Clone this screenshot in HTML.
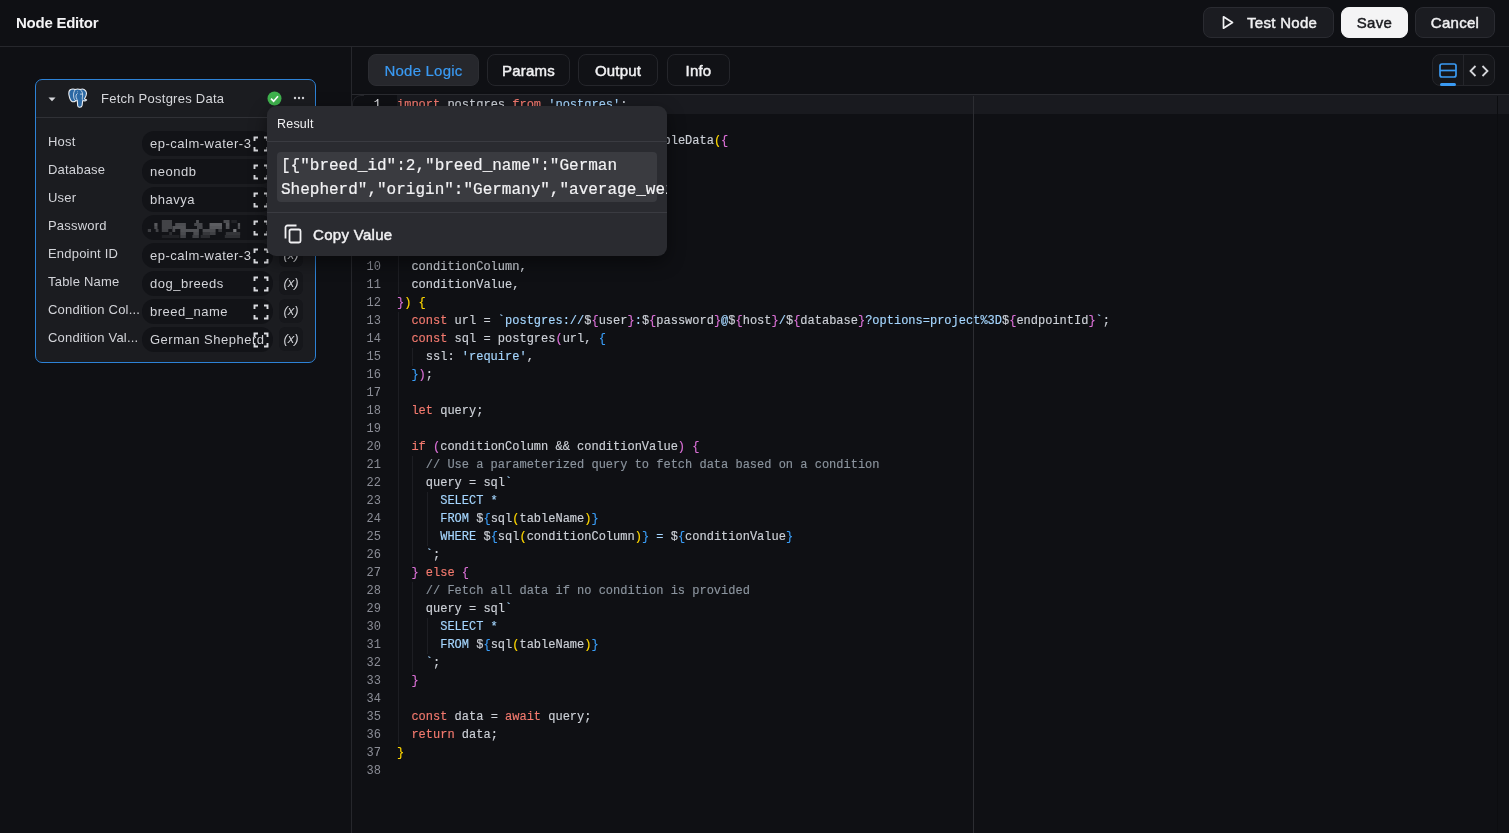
<!DOCTYPE html>
<html><head><meta charset="utf-8"><title>Node Editor</title>
<style>
*{box-sizing:border-box;margin:0;padding:0}
html,body{width:1509px;height:833px;overflow:hidden;background:#0f1014;color:#e6e6ea;font-family:"Liberation Sans",sans-serif;}
.top{position:absolute;left:0;top:0;width:1509px;height:47px;border-bottom:1px solid #26272c;}
.title{position:absolute;left:16px;top:13.500px;font-size:15px;font-weight:bold;color:#f4f4f6;letter-spacing:-0.25px}
.btn{position:absolute;top:7px;height:31px;border-radius:8px;background:#1b1c21;border:1px solid #2a2b31;color:#f1f1f3;font-size:15px;font-weight:normal;-webkit-text-stroke:.45px currentColor;letter-spacing:.3px;line-height:29px;text-align:center}
.left{position:absolute;left:0;top:47px;width:352px;height:786px;border-right:1px solid #26272c}
.card{position:absolute;left:35.300px;top:79px;width:280.500px;height:284px;border:1.5px solid #2d82d6;border-radius:7px;background:#1b1c20}
.chead{height:38px;border-bottom:1px solid #303136;position:relative}
.chead .tt{position:absolute;left:65px;top:11px;font-size:13px;color:#d6d7db;letter-spacing:.25px}
.row{position:absolute;left:0;height:24px;width:100%}
.lab{position:absolute;left:12px;top:3px;font-size:13px;color:#d3d4d9;letter-spacing:.2px;white-space:nowrap}
.pill{position:absolute;left:106px;top:0;width:131px;height:25px;border-radius:12px;background:#121317;overflow:hidden}
.pill .v{position:absolute;left:8px;top:5px;font-size:13px;color:#d3d4d9;white-space:nowrap;letter-spacing:.5px}
.pill .ex{position:absolute;left:111px;top:5px}
.xb{position:absolute;left:243px;top:0;width:24px;height:24px;border-radius:6px;background:#16171b;text-align:center;font-size:13px;line-height:23px;color:#cfd0d5}
.tab{position:absolute;top:54px;height:32px;border-radius:8px;border:1px solid #25262b;background:#111216;color:#f1f1f3;font-size:15px;font-weight:normal;-webkit-text-stroke:.45px currentColor;letter-spacing:.2px;line-height:32px;text-align:center}
.tab.act{background:#26272c;border-color:#2c2d32;color:#3a9af3;-webkit-text-stroke:.2px currentColor}
.editor{position:absolute;left:352px;top:94px;padding-top:1px;width:1157px;height:738px;border-top:1px solid #2a2b30;background:#0f1014;font-family:"Liberation Mono","DejaVu Sans Mono",monospace;font-size:12px}
.ln{position:relative;height:18px;line-height:18px;white-space:pre}
.ln.cur:before{content:'';position:absolute;left:45px;right:0;top:-1px;height:19px;background:#191a1f}
.no{position:absolute;left:0;width:29px;text-align:right;color:#8b8d96}
.ln.cur .no{color:#e6e6ea}
.cd{position:absolute;left:45px;-webkit-text-stroke:.15px currentColor}
.g{position:absolute;top:0;width:1px;height:18px;background:#1d1e23}
.k{color:#f47a6f}.s{color:#a5d6ff}.c{color:#8b949e}.t,.f{color:#cdd1d8}.b1{color:#ffd700}.b2{color:#da70d6}.b3{color:#3a9cf5}
.ruler{position:absolute;left:973px;top:96px;width:1px;height:737px;background:#2c2d32}
.pop{position:absolute;left:267px;top:106px;width:400px;height:150px;border-radius:9px;background:#2a2b30;box-shadow:0 6px 18px rgba(0,0,0,.45);overflow:hidden}
.pop .h{position:absolute;left:10px;top:10.500px;font-size:12.5px;color:#f0f0f2;letter-spacing:.2px}
.pop .sep{position:absolute;left:0;width:400px;height:1px;background:#3a3b41}
.pop .cb{position:absolute;left:10px;top:46px;width:380px;height:50px;border-radius:4px;background:#3a3b40;font-family:"Liberation Mono","DejaVu Sans Mono",monospace;font-size:16px;line-height:24px;color:#f2f2f4;white-space:pre;padding:2px 0 0 4px;-webkit-text-stroke:.2px currentColor;overflow:visible}
.pop .cv{position:absolute;left:46px;top:119.500px;font-size:15px;-webkit-text-stroke:.45px currentColor;letter-spacing:.3px;color:#f1f1f3}
body>*{will-change:transform}
</style></head><body>
<div class="top"><div class="title">Node Editor</div>
<div class="btn" style="left:1203px;width:131px"><svg style="position:absolute;left:17px;top:7px" width="14" height="15" viewBox="0 0 14 15"><path d="M2.5 1.8 L11.5 7.5 L2.5 13.2 Z" fill="none" stroke="#f1f1f3" stroke-width="1.7" stroke-linejoin="round"/></svg><span style="position:absolute;left:43px;top:0">Test Node</span></div>
<div class="btn" style="left:1341px;width:67px;background:#f4f4f5;border-color:#f4f4f5;color:#1a1b1f">Save</div>
<div class="btn" style="left:1415px;width:80px">Cancel</div>
</div>
<div class="left"></div>
<div class="tab act" style="left:368px;width:111px">Node Logic</div>
<div class="tab" style="left:487px;width:83px">Params</div>
<div class="tab" style="left:578px;width:80px">Output</div>
<div class="tab" style="left:667px;width:63px">Info</div>
<div style="position:absolute;left:1432px;top:54px;width:63px;height:32px;border-radius:8px;border:1px solid #25262b;background:#15161a">
<div style="position:absolute;left:30px;top:0;width:1px;height:30px;background:#25262b"></div>
<svg style="position:absolute;left:6px;top:8px" width="18" height="16" viewBox="0 0 18 16"><rect x="1" y="1" width="16" height="13" rx="2" fill="none" stroke="#3a9af3" stroke-width="1.7"/><path d="M1 7.5h16" stroke="#3a9af3" stroke-width="1.7"/></svg>
<div style="position:absolute;left:7px;top:28px;width:16px;height:3px;border-radius:2px;background:#3a9af3"></div>
<svg style="position:absolute;left:36px;top:8.5px" width="20" height="14" viewBox="0 0 20 14"><path d="M6.5 2 L1.5 7 L6.5 12 M13.5 2 L18.5 7 L13.5 12" fill="none" stroke="#d6d7db" stroke-width="1.8"/></svg>
</div>
<div class="editor">
<div class="ln cur"><span class="no">1</span><span class="cd"><span class="k">import</span><span class="t"> postgres </span><span class="k">from</span><span class="t"> </span><span class="s">&#x27;postgres&#x27;</span><span class="t">;</span></span></div>
<div class="ln"><span class="no">2</span><span class="cd"></span></div>
<div class="ln"><span class="no">3</span><span class="cd"><span class="k">export</span><span class="t"> </span><span class="k">default</span><span class="t"> </span><span class="k">async</span><span class="t"> </span><span class="k">function</span><span class="t"> </span><span class="f">fetchTableData</span><span class="b1">(</span><span class="b2">{</span></span></div>
<div class="ln"><span class="no">4</span><i class="g" style="left:46.0px"></i><span class="cd"><span class="t">  host,</span></span></div>
<div class="ln"><span class="no">5</span><i class="g" style="left:46.0px"></i><span class="cd"><span class="t">  database,</span></span></div>
<div class="ln"><span class="no">6</span><i class="g" style="left:46.0px"></i><span class="cd"><span class="t">  user,</span></span></div>
<div class="ln"><span class="no">7</span><i class="g" style="left:46.0px"></i><span class="cd"><span class="t">  password,</span></span></div>
<div class="ln"><span class="no">8</span><i class="g" style="left:46.0px"></i><span class="cd"><span class="t">  endpointId,</span></span></div>
<div class="ln"><span class="no">9</span><i class="g" style="left:46.0px"></i><span class="cd"><span class="t">  tableName,</span></span></div>
<div class="ln"><span class="no">10</span><i class="g" style="left:46.0px"></i><span class="cd"><span class="t">  conditionColumn,</span></span></div>
<div class="ln"><span class="no">11</span><i class="g" style="left:46.0px"></i><span class="cd"><span class="t">  conditionValue,</span></span></div>
<div class="ln"><span class="no">12</span><span class="cd"><span class="b2">}</span><span class="b1">)</span><span class="t"> </span><span class="b1">{</span></span></div>
<div class="ln"><span class="no">13</span><i class="g" style="left:46.0px"></i><span class="cd"><span class="t">  </span><span class="k">const</span><span class="t"> url = </span><span class="s">`postgres://</span><span class="t">$</span><span class="b2">{</span><span class="t">user</span><span class="b2">}</span><span class="s">:</span><span class="t">$</span><span class="b2">{</span><span class="t">password</span><span class="b2">}</span><span class="s">@</span><span class="t">$</span><span class="b2">{</span><span class="t">host</span><span class="b2">}</span><span class="s">/</span><span class="t">$</span><span class="b2">{</span><span class="t">database</span><span class="b2">}</span><span class="s">?options=project%3D</span><span class="t">$</span><span class="b2">{</span><span class="t">endpointId</span><span class="b2">}</span><span class="s">`</span><span class="t">;</span></span></div>
<div class="ln"><span class="no">14</span><i class="g" style="left:46.0px"></i><span class="cd"><span class="t">  </span><span class="k">const</span><span class="t"> sql = postgres</span><span class="b2">(</span><span class="t">url, </span><span class="b3">{</span></span></div>
<div class="ln"><span class="no">15</span><i class="g" style="left:46.0px"></i><i class="g" style="left:60.4px"></i><span class="cd"><span class="t">    ssl: </span><span class="s">&#x27;require&#x27;</span><span class="t">,</span></span></div>
<div class="ln"><span class="no">16</span><i class="g" style="left:46.0px"></i><span class="cd"><span class="t">  </span><span class="b3">}</span><span class="b2">)</span><span class="t">;</span></span></div>
<div class="ln"><span class="no">17</span><i class="g" style="left:46.0px"></i><span class="cd"></span></div>
<div class="ln"><span class="no">18</span><i class="g" style="left:46.0px"></i><span class="cd"><span class="t">  </span><span class="k">let</span><span class="t"> query;</span></span></div>
<div class="ln"><span class="no">19</span><i class="g" style="left:46.0px"></i><span class="cd"></span></div>
<div class="ln"><span class="no">20</span><i class="g" style="left:46.0px"></i><span class="cd"><span class="t">  </span><span class="k">if</span><span class="t"> </span><span class="b2">(</span><span class="t">conditionColumn &amp;&amp; conditionValue</span><span class="b2">)</span><span class="t"> </span><span class="b2">{</span></span></div>
<div class="ln"><span class="no">21</span><i class="g" style="left:46.0px"></i><i class="g" style="left:60.4px"></i><span class="cd"><span class="t">    </span><span class="c">// Use a parameterized query to fetch data based on a condition</span></span></div>
<div class="ln"><span class="no">22</span><i class="g" style="left:46.0px"></i><i class="g" style="left:60.4px"></i><span class="cd"><span class="t">    query = sql</span><span class="s">`</span></span></div>
<div class="ln"><span class="no">23</span><i class="g" style="left:46.0px"></i><i class="g" style="left:60.4px"></i><i class="g" style="left:74.8px"></i><span class="cd"><span class="s">      SELECT *</span></span></div>
<div class="ln"><span class="no">24</span><i class="g" style="left:46.0px"></i><i class="g" style="left:60.4px"></i><i class="g" style="left:74.8px"></i><span class="cd"><span class="s">      FROM </span><span class="t">$</span><span class="b3">{</span><span class="t">sql</span><span class="b1">(</span><span class="t">tableName</span><span class="b1">)</span><span class="b3">}</span></span></div>
<div class="ln"><span class="no">25</span><i class="g" style="left:46.0px"></i><i class="g" style="left:60.4px"></i><i class="g" style="left:74.8px"></i><span class="cd"><span class="s">      WHERE </span><span class="t">$</span><span class="b3">{</span><span class="t">sql</span><span class="b1">(</span><span class="t">conditionColumn</span><span class="b1">)</span><span class="b3">}</span><span class="s"> = </span><span class="t">$</span><span class="b3">{</span><span class="t">conditionValue</span><span class="b3">}</span></span></div>
<div class="ln"><span class="no">26</span><i class="g" style="left:46.0px"></i><i class="g" style="left:60.4px"></i><span class="cd"><span class="s">    `</span><span class="t">;</span></span></div>
<div class="ln"><span class="no">27</span><i class="g" style="left:46.0px"></i><span class="cd"><span class="t">  </span><span class="b2">}</span><span class="t"> </span><span class="k">else</span><span class="t"> </span><span class="b2">{</span></span></div>
<div class="ln"><span class="no">28</span><i class="g" style="left:46.0px"></i><i class="g" style="left:60.4px"></i><span class="cd"><span class="t">    </span><span class="c">// Fetch all data if no condition is provided</span></span></div>
<div class="ln"><span class="no">29</span><i class="g" style="left:46.0px"></i><i class="g" style="left:60.4px"></i><span class="cd"><span class="t">    query = sql</span><span class="s">`</span></span></div>
<div class="ln"><span class="no">30</span><i class="g" style="left:46.0px"></i><i class="g" style="left:60.4px"></i><i class="g" style="left:74.8px"></i><span class="cd"><span class="s">      SELECT *</span></span></div>
<div class="ln"><span class="no">31</span><i class="g" style="left:46.0px"></i><i class="g" style="left:60.4px"></i><i class="g" style="left:74.8px"></i><span class="cd"><span class="s">      FROM </span><span class="t">$</span><span class="b3">{</span><span class="t">sql</span><span class="b1">(</span><span class="t">tableName</span><span class="b1">)</span><span class="b3">}</span></span></div>
<div class="ln"><span class="no">32</span><i class="g" style="left:46.0px"></i><i class="g" style="left:60.4px"></i><span class="cd"><span class="s">    `</span><span class="t">;</span></span></div>
<div class="ln"><span class="no">33</span><i class="g" style="left:46.0px"></i><span class="cd"><span class="t">  </span><span class="b2">}</span></span></div>
<div class="ln"><span class="no">34</span><i class="g" style="left:46.0px"></i><span class="cd"></span></div>
<div class="ln"><span class="no">35</span><i class="g" style="left:46.0px"></i><span class="cd"><span class="t">  </span><span class="k">const</span><span class="t"> data = </span><span class="k">await</span><span class="t"> query;</span></span></div>
<div class="ln"><span class="no">36</span><i class="g" style="left:46.0px"></i><span class="cd"><span class="t">  </span><span class="k">return</span><span class="t"> data;</span></span></div>
<div class="ln"><span class="no">37</span><span class="cd"><span class="b1">}</span></span></div>
<div class="ln"><span class="no">38</span><span class="cd"></span></div>
</div>
<div style="position:absolute;left:352px;top:95px;width:12px;height:12px;border-top-left-radius:9px;border-left:1px solid #24252a;border-top:1px solid #24252a;border-right:0;border-bottom:0"></div><div class="ruler"></div><div style="position:absolute;left:1497px;top:96px;width:1px;height:737px;background:#0c0d10"></div>
<div class="card">
<div class="chead">
<svg style="position:absolute;left:11.500px;top:16.500px" width="8" height="5" viewBox="0 0 8 5"><path d="M.5 .5h7L4 4.300z" fill="#d6d7db"/></svg>
<svg style="position:absolute;left:31.500px;top:7.500px" width="20" height="21" viewBox="0 0 20 21"><path d="M3.200 1.300C1.200 1.900.5 4.300 1 7.200c.5 2.900 1.600 5.900 3.500 6.500 1.300.4 2.400-.3 3.300-1l1.500.1.400 4.900c.2 2.100 4 2.100 4.400-.3l.6-4.900c1.200.5 3.200.3 3.900-.6-1-.2-1.800-.5-2.100-1.100 1.600-2.500 2.600-6 1.100-8-1.400-1.900-3.900-2-5.500-1.300-1.400-.6-3.400-.6-4.900 0-1.200-.6-2.800-.6-4-.2z" fill="#2c69a4" stroke="#eceef2" stroke-width="1.100" stroke-linejoin="round"/><path d="M7.300 1.600C5.700 3.200 5.200 6.200 5.700 9.100c.3 1.900 1 3.100 2 3.600M9.300 5.500c-1.100.6-1.600 2.400-1.100 4 .4 1.400 1.100 2 1.200 3.200M12.300 1.600c1.700 1.100 2.700 3.600 2.300 6.500-.2 1.300-.6 2.300-.3 3.300M12.300 6.200c.8-.5 1.800-.3 2.100.5" fill="none" stroke="#dfe8f2" stroke-width=".8" stroke-linecap="round"/><circle cx="9.500" cy="3.700" r=".55" fill="#9fb4c8"/></svg>
<span class="tt">Fetch Postgres Data</span>
<svg style="position:absolute;left:231px;top:11px" width="15" height="15" viewBox="0 0 15 15"><circle cx="7.500" cy="7.500" r="7" fill="#3fb24d"/><path d="M4 7.700 L6.600 10.200 L11 5.300" fill="none" stroke="#fff" stroke-width="1.700"/></svg>
<svg style="position:absolute;left:257px;top:16px" width="12" height="4" viewBox="0 0 12 4"><circle cx="2" cy="2" r="1.200" fill="#d6d7db"/><circle cx="6" cy="2" r="1.200" fill="#d6d7db"/><circle cx="10" cy="2" r="1.200" fill="#d6d7db"/></svg>
</div>
<div class="row" style="top:51px"><span class="lab">Host</span><span class="pill"><span class="v">ep-calm-water-3</span><svg class="ex" viewBox="0 0 16 16" width="16" height="16"><path d="M1.5 5V1.5H5M11 1.5h3.5V5M14.5 11v3.5H11M5 14.5H1.5V11" fill="none" stroke="#dadbe0" stroke-width="1.9"/></svg></span></div>
<div class="row" style="top:79px"><span class="lab">Database</span><span class="pill"><span class="v">neondb</span><svg class="ex" viewBox="0 0 16 16" width="16" height="16"><path d="M1.5 5V1.5H5M11 1.5h3.5V5M14.5 11v3.5H11M5 14.5H1.5V11" fill="none" stroke="#dadbe0" stroke-width="1.9"/></svg></span></div>
<div class="row" style="top:107px"><span class="lab">User</span><span class="pill"><span class="v">bhavya</span><svg class="ex" viewBox="0 0 16 16" width="16" height="16"><path d="M1.5 5V1.5H5M11 1.5h3.5V5M14.5 11v3.5H11M5 14.5H1.5V11" fill="none" stroke="#dadbe0" stroke-width="1.9"/></svg></span></div>
<div class="row" style="top:135px"><span class="lab">Password</span><span class="pill"><svg class="pwsvg" width="110" height="25" viewBox="0 0 110 25" style="position:absolute;left:0;top:0"><rect x="19.8" y="5" width="10.2" height="3" fill="rgb(66,67,71)"/><rect x="54.1" y="5" width="2.8" height="3" fill="rgb(80,81,85)"/><rect x="81.5" y="5" width="6.0" height="3" fill="rgb(76,77,81)"/><rect x="89.3" y="5" width="5.6" height="3" fill="rgb(34,35,39)"/><rect x="12.3" y="8" width="3.2" height="3" fill="rgb(88,89,93)"/><rect x="19.8" y="8" width="10.2" height="3" fill="rgb(66,67,71)"/><rect x="33.2" y="8" width="10.7" height="3" fill="rgb(76,77,81)"/><rect x="52.2" y="8" width="8.3" height="3" fill="rgb(70,71,75)"/><rect x="67.5" y="8" width="12.5" height="3" fill="rgb(92,93,97)"/><rect x="83.8" y="8" width="3.7" height="3" fill="rgb(86,87,91)"/><rect x="95.8" y="8" width="2.3" height="3" fill="rgb(86,87,91)"/><rect x="12.3" y="11" width="3.2" height="3" fill="rgb(76,77,81)"/><rect x="19.8" y="11" width="10.2" height="3" fill="rgb(66,67,71)"/><rect x="30.4" y="11" width="13.5" height="3" fill="rgb(80,81,85)"/><rect x="55.0" y="11" width="5.6" height="3" fill="rgb(70,71,75)"/><rect x="67.5" y="11" width="12.5" height="3" fill="rgb(86,87,91)"/><rect x="83.8" y="11" width="3.7" height="3" fill="rgb(80,81,85)"/><rect x="95.8" y="11" width="2.3" height="3" fill="rgb(76,77,81)"/><rect x="5.8" y="14" width="3.2" height="3" fill="rgb(62,63,67)"/><rect x="13.7" y="14" width="2.8" height="3" fill="rgb(64,65,69)"/><rect x="19.8" y="14" width="6.5" height="3" fill="rgb(64,65,69)"/><rect x="30.4" y="14" width="2.8" height="3" fill="rgb(76,77,81)"/><rect x="38.3" y="14" width="18.6" height="3" fill="rgb(80,81,85)"/><rect x="60.6" y="14" width="13.0" height="3" fill="rgb(74,75,79)"/><rect x="76.3" y="14" width="3.7" height="3" fill="rgb(54,55,59)"/><rect x="91.2" y="14" width="3.2" height="3" fill="rgb(118,119,123)"/><rect x="27.2" y="17" width="2.8" height="3" fill="rgb(44,45,49)"/><rect x="38.3" y="17" width="5.6" height="3" fill="rgb(74,75,79)"/><rect x="51.3" y="17" width="5.6" height="3" fill="rgb(74,75,79)"/><rect x="60.6" y="17" width="7.4" height="3" fill="rgb(54,55,59)"/><rect x="68.0" y="17" width="5.6" height="3" fill="rgb(64,65,69)"/><rect x="83.8" y="17" width="14.4" height="3" fill="rgb(52,53,57)"/><rect x="19.8" y="20" width="17.6" height="3" fill="rgb(32,33,37)"/><rect x="38.3" y="20" width="5.6" height="3" fill="rgb(64,65,69)"/><rect x="50.4" y="20" width="6.5" height="3" fill="rgb(64,65,69)"/><rect x="58.7" y="20" width="9.3" height="3" fill="rgb(42,43,47)"/><rect x="82.8" y="20" width="15.3" height="3" fill="rgb(46,47,51)"/></svg><svg class="ex" viewBox="0 0 16 16" width="16" height="16"><path d="M1.5 5V1.5H5M11 1.5h3.5V5M14.5 11v3.5H11M5 14.5H1.5V11" fill="none" stroke="#dadbe0" stroke-width="1.9"/></svg></span></div>
<div class="row" style="top:163px"><span class="lab">Endpoint ID</span><span class="pill"><span class="v">ep-calm-water-3</span><svg class="ex" viewBox="0 0 16 16" width="16" height="16"><path d="M1.5 5V1.5H5M11 1.5h3.5V5M14.5 11v3.5H11M5 14.5H1.5V11" fill="none" stroke="#dadbe0" stroke-width="1.9"/></svg></span><span class="xb"><i>(x)</i></span></div>
<div class="row" style="top:191px"><span class="lab">Table Name</span><span class="pill"><span class="v">dog_breeds</span><svg class="ex" viewBox="0 0 16 16" width="16" height="16"><path d="M1.5 5V1.5H5M11 1.5h3.5V5M14.5 11v3.5H11M5 14.5H1.5V11" fill="none" stroke="#dadbe0" stroke-width="1.9"/></svg></span><span class="xb"><i>(x)</i></span></div>
<div class="row" style="top:219px"><span class="lab">Condition Col...</span><span class="pill"><span class="v">breed_name</span><svg class="ex" viewBox="0 0 16 16" width="16" height="16"><path d="M1.5 5V1.5H5M11 1.5h3.5V5M14.5 11v3.5H11M5 14.5H1.5V11" fill="none" stroke="#dadbe0" stroke-width="1.9"/></svg></span><span class="xb"><i>(x)</i></span></div>
<div class="row" style="top:247px"><span class="lab">Condition Val...</span><span class="pill"><span class="v">German Shepherd</span><svg class="ex" viewBox="0 0 16 16" width="16" height="16"><path d="M1.5 5V1.5H5M11 1.5h3.5V5M14.5 11v3.5H11M5 14.5H1.5V11" fill="none" stroke="#dadbe0" stroke-width="1.9"/></svg></span><span class="xb"><i>(x)</i></span></div>
</div>
<div class="pop">
<div class="h">Result</div>
<div class="sep" style="top:35px"></div>
<div class="cb">[{"breed_id":2,"breed_name":"German
Shepherd","origin":"Germany","average_weight":75}]</div>
<div class="sep" style="top:106px"></div>
<svg style="position:absolute;left:17px;top:118px" width="18" height="20" viewBox="0 0 18 20"><rect x="5.500" y="5.500" width="11" height="13" rx="1.500" fill="none" stroke="#f1f1f3" stroke-width="1.800"/><path d="M12.500 1.500H3.500a2 2 0 0 0-2 2V14.500" fill="none" stroke="#f1f1f3" stroke-width="1.800"/></svg>
<div class="cv">Copy Value</div>
</div>
</body></html>
